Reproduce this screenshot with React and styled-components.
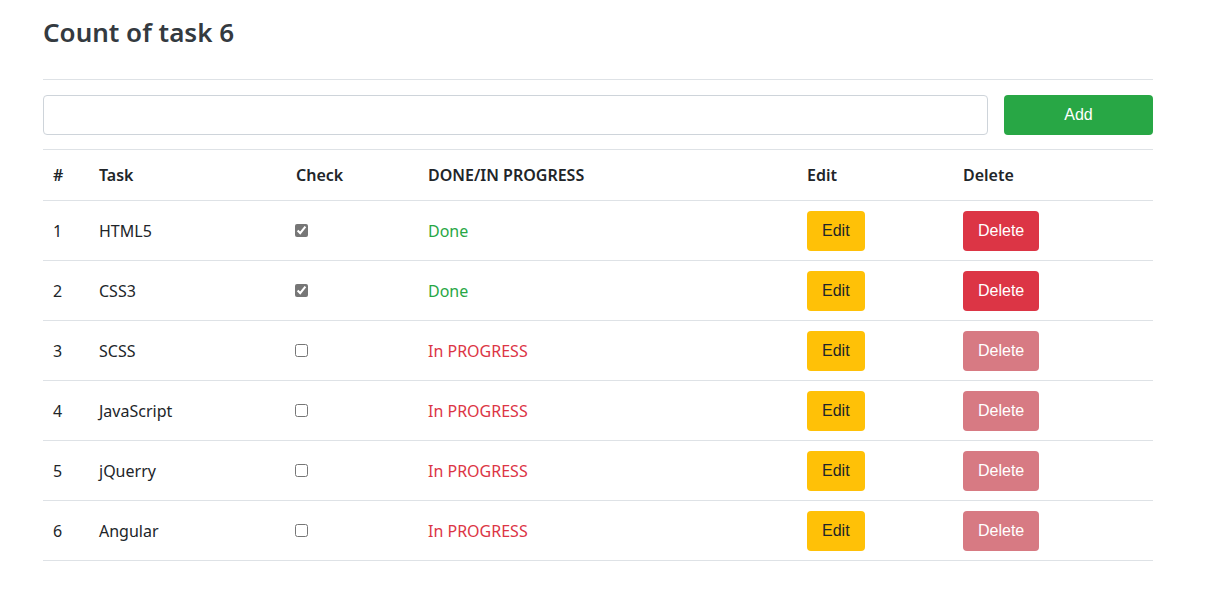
import React from 'react';
import styled, { createGlobalStyle } from 'styled-components';

const GlobalStyle = createGlobalStyle`
  body {
    margin: 0;
    background: #fff;
    font-family: "Noto Sans", "Open Sans", sans-serif;
    font-size: 16px;
    line-height: 1.5;
    color: #212529;
  }
`;

const Container = styled.div`
  width: 1110px;
  margin-left: 43px;
  padding-top: 13px;
`;

const Title = styled.h4`
  margin: 0;
  font-size: 26px;
  font-weight: 600;
  line-height: 38px;
  color: #343a40;
  padding-bottom: 28px;
  border-bottom: 1px solid #dee2e6;
`;

const Form = styled.div`
  display: flex;
  gap: 16px;
  padding: 15px 0 14px;
`;

const Input = styled.input`
  flex: 1;
  height: 40px;
  box-sizing: border-box;
  border: 1px solid #ced4da;
  border-radius: 4px;
  font-size: 16px;
  padding: 6px 12px;
  outline: none;
`;

const Button = styled.button`
  box-sizing: border-box;
  height: 40px;
  padding: 0 15px;
  border: none;
  border-radius: 4px;
  background: ${(p) => p.$bg};
  color: ${(p) => p.$fg};
  font-family: "Liberation Sans", Arial, sans-serif;
  font-size: 16px;
  cursor: pointer;
`;

const AddButton = styled(Button)`
  width: 149px;
`;

const Table = styled.table`
  width: 1110px;
  border-collapse: collapse;
  table-layout: fixed;
`;

const Th = styled.th`
  box-sizing: border-box;
  text-align: left;
  font-weight: 600;
  padding: 0 10px;
  height: 51px;
  border-top: 1px solid #dee2e6;
  border-bottom: 1px solid #dee2e6;
  width: ${(p) => p.$w}px;
`;

const Td = styled.td`
  padding: 0 10px;
  height: 59px;
  border-bottom: 1px solid #dee2e6;
  vertical-align: middle;
  color: ${(p) => p.$color || '#212529'};
`;

const Check = styled.input`
  margin: 0 0 3px -1px;
  width: 13px;
  height: 13px;
  vertical-align: middle;
  accent-color: #767676;
`;

const tasks = [
  { name: 'HTML5', done: true },
  { name: 'CSS3', done: true },
  { name: 'SCSS', done: false },
  { name: 'JavaScript', done: false },
  { name: 'jQuerry', done: false },
  { name: 'Angular', done: false },
];

export default function App() {
  return (
    <>
      <GlobalStyle />
      <Container>
        <Title>Count of task {tasks.length}</Title>
        <Form>
          <Input type="text" />
          <AddButton $bg="#28a745" $fg="#fff">Add</AddButton>
        </Form>
        <Table>
          <thead>
            <tr>
              <Th $w={46}>#</Th>
              <Th $w={197}>Task</Th>
              <Th $w={132}>Check</Th>
              <Th $w={379}>DONE/IN PROGRESS</Th>
              <Th $w={156}>Edit</Th>
              <Th $w={200}>Delete</Th>
            </tr>
          </thead>
          <tbody>
            {tasks.map((t, i) => (
              <tr key={t.name}>
                <Td>{i + 1}</Td>
                <Td>{t.name}</Td>
                <Td>
                  <Check type="checkbox" checked={t.done} readOnly />
                </Td>
                <Td $color={t.done ? '#28a745' : '#dc3545'}>
                  {t.done ? 'Done' : 'In PROGRESS'}
                </Td>
                <Td>
                  <Button $bg="#ffc107" $fg="#212529">Edit</Button>
                </Td>
                <Td>
                  <Button
                    $bg={t.done ? '#dc3545' : '#d77a83'}
                    $fg="#fff"
                    disabled={!t.done}
                  >
                    Delete
                  </Button>
                </Td>
              </tr>
            ))}
          </tbody>
        </Table>
      </Container>
    </>
  );
}
